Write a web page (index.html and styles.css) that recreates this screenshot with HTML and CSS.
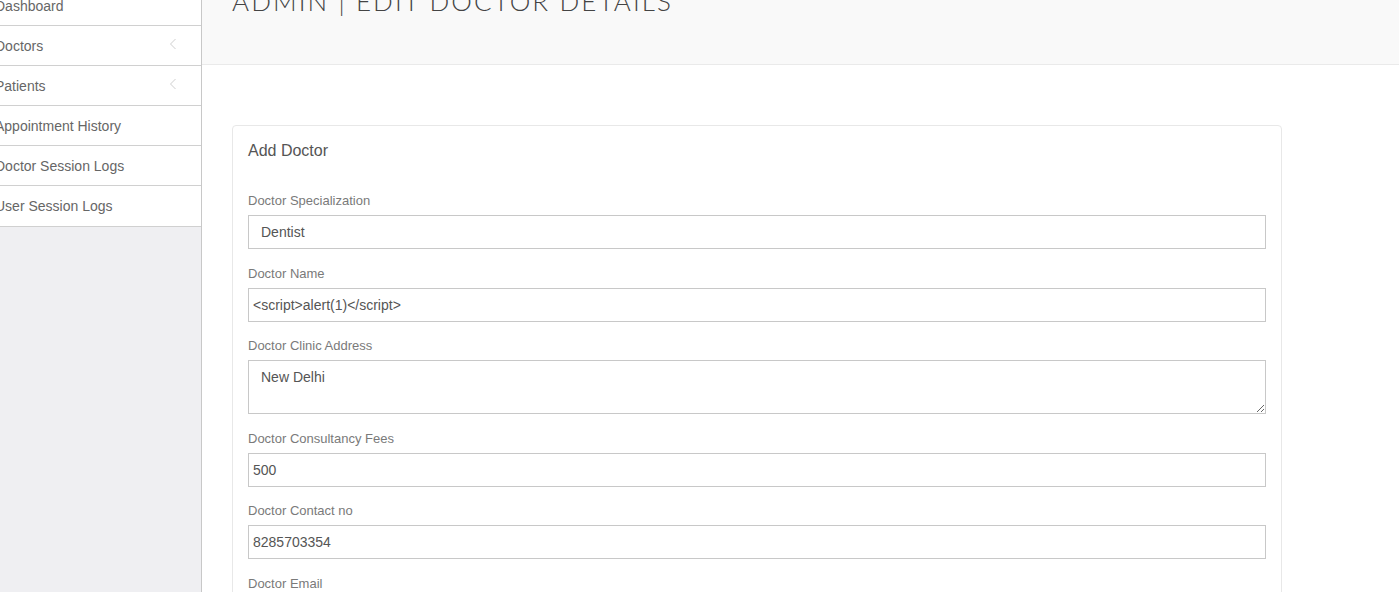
FILE: index.html
```html
<!DOCTYPE html>
<html>
<head>
<meta charset="utf-8">
<title>Admin | Edit Doctor Details</title>
<link rel="stylesheet" href="styles.css">
</head>
<body>
<div class="app">
  <aside class="sidebar">
    <ul class="menu">
      <li class="menu-item"><span class="menu-text">Dashboard</span></li>
      <li class="menu-item"><span class="menu-text">Doctors</span>
        <svg class="chev" width="8" height="12" viewBox="0 0 8 12"><polyline points="6.5,1 1.5,6 6.5,11" fill="none" stroke="#cfcfcf" stroke-width="1"/></svg></li>
      <li class="menu-item"><span class="menu-text">Patients</span>
        <svg class="chev" width="8" height="12" viewBox="0 0 8 12"><polyline points="6.5,1 1.5,6 6.5,11" fill="none" stroke="#cfcfcf" stroke-width="1"/></svg></li>
      <li class="menu-item"><span class="menu-text">Appointment History</span></li>
      <li class="menu-item"><span class="menu-text">Doctor Session Logs</span></li>
      <li class="menu-item"><span class="menu-text">User Session Logs</span></li>
    </ul>
  </aside>
  <main class="main">
    <header class="page-header">
      <h1 class="page-title">ADMIN | EDIT DOCTOR DETAILS</h1>
    </header>
    <section class="content">
      <div class="panel">
        <div class="panel-heading">Add Doctor</div>
        <form class="panel-body">
          <div class="form-group">
            <label class="label">Doctor Specialization</label>
            <select class="control select"><option>Dentist</option></select>
          </div>
          <div class="form-group">
            <label class="label">Doctor Name</label>
            <input class="control" type="text" value="&lt;script&gt;alert(1)&lt;/script&gt;">
          </div>
          <div class="form-group">
            <label class="label">Doctor Clinic Address</label>
            <textarea class="control textarea">New Delhi</textarea>
          </div>
          <div class="form-group">
            <label class="label">Doctor Consultancy Fees</label>
            <input class="control" type="text" value="500">
          </div>
          <div class="form-group">
            <label class="label">Doctor Contact no</label>
            <input class="control" type="text" value="8285703354">
          </div>
          <div class="form-group">
            <label class="label">Doctor Email</label>
            <input class="control" type="text" value="">
          </div>
        </form>
      </div>
    </section>
  </main>
</div>
</body>
</html>
```
FILE: styles.css
```css
html, body {
  margin: 0;
  padding: 0;
  height: 100%;
  overflow: hidden;
  background: #fff;
  font-family: "Liberation Sans", Arial, sans-serif;
}
.app {
  display: flex;
  min-height: 100%;
  align-items: stretch;
}
.sidebar {
  width: 201px;
  flex: 0 0 201px;
  background: #efeff2;
  border-right: 1px solid #c8c8c8;
}
.menu {
  list-style: none;
  margin: -14px 0 0 0;
  padding: 0;
  background: #fff;
}
.menu-item {
  height: 39px;
  border-bottom: 1px solid #d0d0d0;
  display: flex;
  align-items: center;
  justify-content: space-between;
  font-size: 14px;
  color: #666;
}
.menu-item:last-child {
  height: 40px;
}
.menu-text {
  margin-left: -5px;
}
.chev {
  margin-right: 24px;
  margin-top: -4px;
}
.main {
  flex: 1;
  min-width: 0;
}
.page-header {
  height: 65px;
  box-sizing: border-box;
  background: #f9f9f9;
  border-bottom: 1px solid #eaeaea;
  padding-left: 30px;
  overflow: hidden;
}
.page-title {
  margin: -14px 0 0 0;
  font-family: Lato, "Liberation Sans", sans-serif;
  font-weight: 300;
  font-size: 26px;
  line-height: 30px;
  color: #444;
  letter-spacing: 2.1px;
  white-space: nowrap;
}
.content {
  padding: 60px 30px 0 30px;
}
.panel {
  width: 1050px;
  box-sizing: border-box;
  border: 1px solid #e8e8e8;
  border-radius: 4px;
  background: #fff;
}
.panel-heading {
  padding: 15px;
  font-size: 16px;
  line-height: 20px;
  color: #555;
}
.panel-body {
  padding: 15px;
  margin: 0;
}
.form-group {
  margin-bottom: 14.5px;
}
.label {
  display: block;
  font-size: 13px;
  line-height: 19px;
  color: #7a7a7a;
  margin-bottom: 5px;
}
.control {
  display: block;
  width: 100%;
  box-sizing: border-box;
  height: 34px;
  border: 1px solid #c8c8c8;
  border-radius: 0;
  padding: 6px 4px;
  font-family: "Liberation Sans", Arial, sans-serif;
  font-size: 14px;
  color: #555;
  background: #fff;
  outline: none;
}
.select {
  appearance: none;
  -webkit-appearance: none;
  padding: 6px 12px;
}
.textarea {
  height: 54px;
  padding: 6px 12px;
  resize: vertical;
  line-height: 20px;
}
```
